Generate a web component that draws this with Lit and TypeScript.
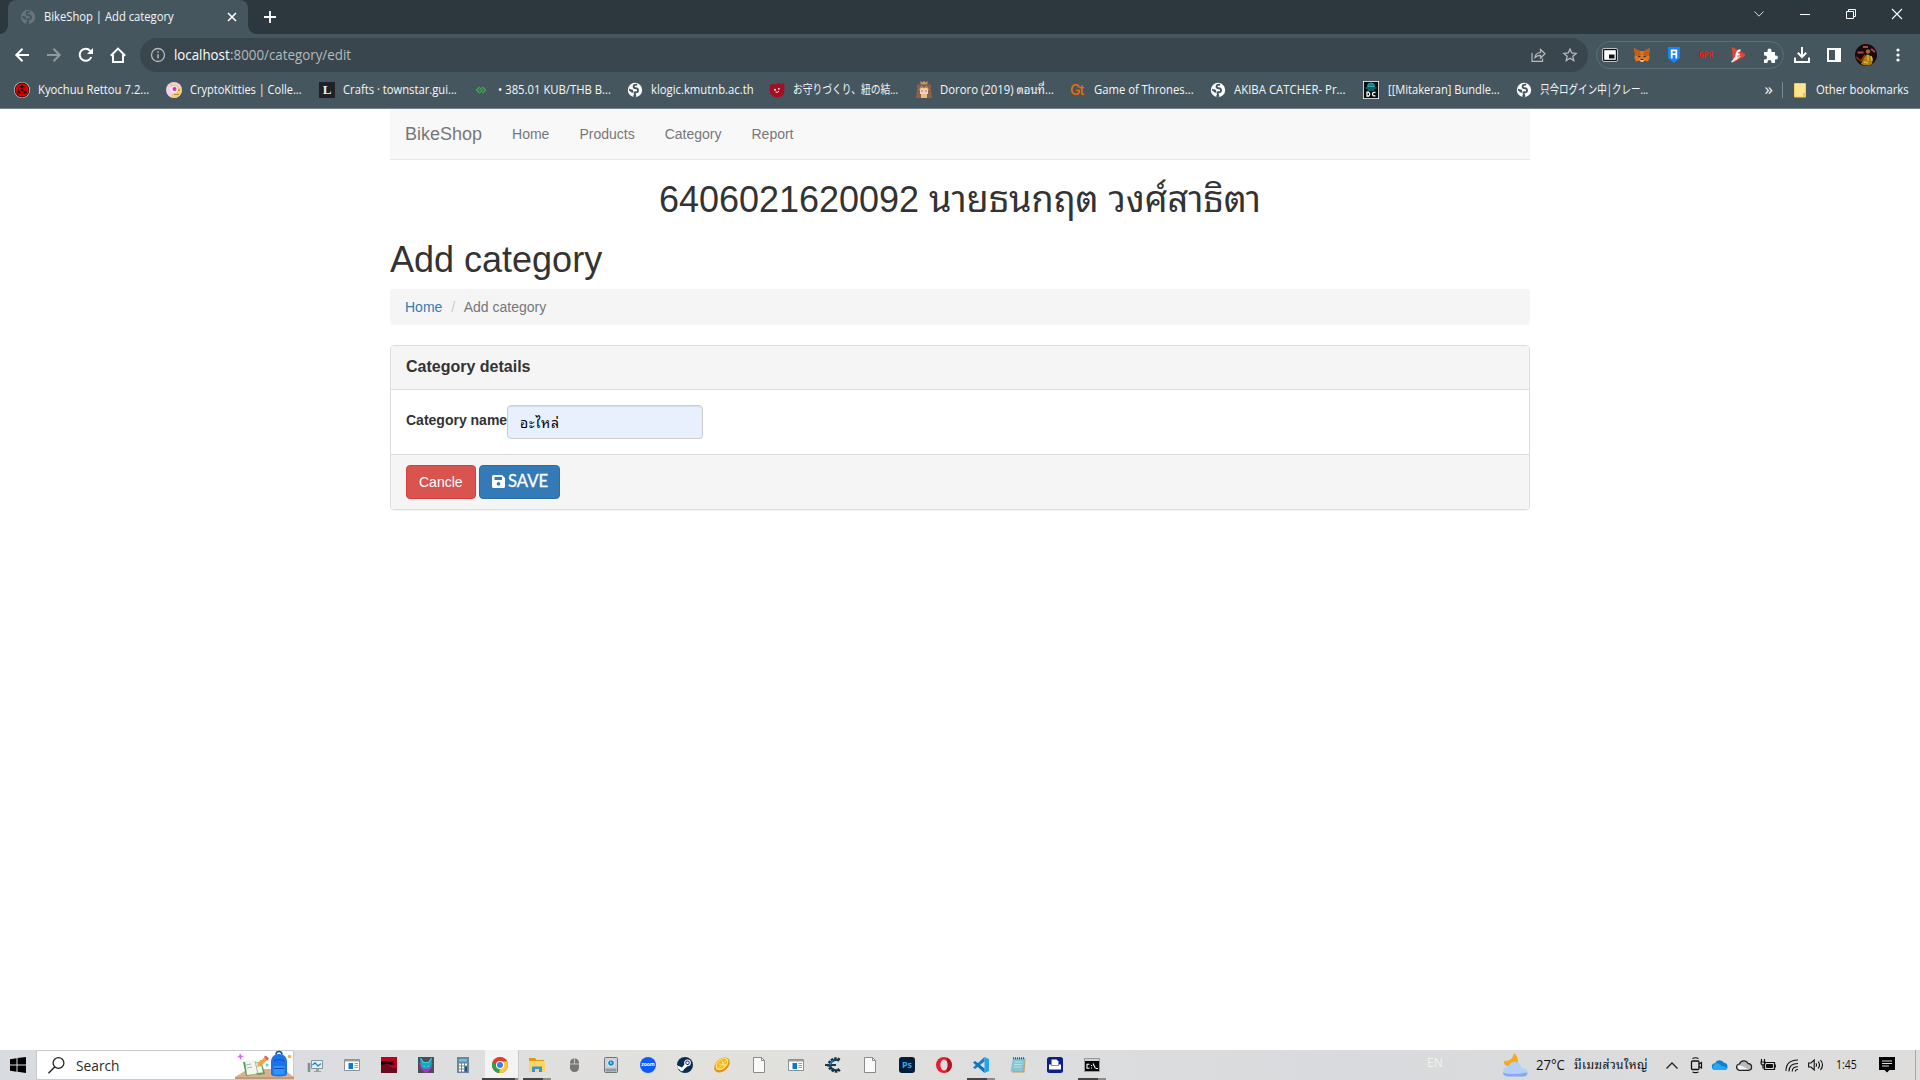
import { LitElement, html, svg, css, TemplateResult } from "lit";
import { customElement, property } from "lit/decorators.js";

/** One line of text that fills the given width: narrowed if too wide, tracked if too short. */
@customElement("fit-text")
class FitText extends LitElement {
  static styles = css`
    :host { display: inline-block; white-space: nowrap; flex: none; }
    span { display: inline-block; white-space: pre; transform-origin: 0 50%; }
  `;
  @property({ type: Number }) w = 0;
  @property() text = "";
  render() { return html`<span>${this.text}</span>`; }
  updated() {
    const s = this.renderRoot.querySelector("span") as HTMLElement;
    const natural = s.offsetWidth;
    if (natural > this.w + 1) {
      s.style.transform = `scaleX(${(this.w / natural).toFixed(4)})`;
    } else {
      const seg = new (Intl as any).Segmenter("en", { granularity: "grapheme" });
      const n = [...seg.segment(this.text)].length;
      s.style.letterSpacing = ((this.w - s.getBoundingClientRect().width) / n).toFixed(3) + "px";
    }
    this.style.width = this.w + "px";
  }
}

const ic = (w: number, h: number, body: TemplateResult | TemplateResult[], box = `0 0 ${w} ${h}`) =>
  html`<svg width=${w} height=${h} viewBox=${box} fill="none">${body}</svg>`;

const globe = (bg: string, fg: string) => ic(16, 16, svg`
  <circle cx="8" cy="8" r="7.200" fill=${bg}/>
  <path d="M10.200 2.700Q6.800 2.400 6.600 4.300T8.800 6.300 11 8.600 8.800 10.200 8 12.600 6.400 13.600" stroke=${fg} stroke-width="1.900"/>
  <path d="M2 6.800l3.800 1 .8 2.400-1.600.6L2 8.600z" fill=${fg}/>`);
const W = "#fff", BAR = "#46565f";

const marks: { ic: TemplateResult; t: string; w: number; gap: number; end: number }[] = [
  { t: "Kyochuu Rettou 7.2...", w: 111, gap: 8, end: 17, ic: ic(16, 16, svg`<circle cx="8" cy="8" r="8" fill="#ddd"/><circle cx="8" cy="8" r="7.4" fill="#111"/><circle cx="8" cy="8" r="6.6" fill="#e60000"/><circle cx="8" cy="8" r="3.8" stroke="#400" stroke-width=".8"/><circle cx="8" cy="8" r="1.4" fill="#100"/><circle cx="8" cy="4.3" r="1.6" fill="#100"/><circle cx="4.8" cy="10" r="1.6" fill="#100"/><circle cx="11.2" cy="10" r="1.6" fill="#100"/>`) },
  { t: "CryptoKitties | Colle...", w: 112, gap: 8, end: 17, ic: ic(16, 16, svg`<circle cx="8" cy="8" r="8" fill="#eecff0"/><path d="M4 2l2-1 1 2 3-.5 4 3 2 3-2 5-4 2.500-5-1 2-5z" fill="#f0cf6c"/><path d="M4 6l3-2 4 1 1 3-2 3-4 0z" fill="#fbe9f7"/><circle cx="8.5" cy="7" r="2" fill="#e02bc0"/><circle cx="13" cy="8" r=".8" fill="#c03aa0"/><path d="M8 12.500h5" stroke="#b78a2c"/>`) },
  { t: "Crafts · townstar.gui...", w: 114, gap: 8, end: 16, ic: html`<span class="lbox">L</span>` },
  { t: "• 385.01 KUB/THB B...", w: 113, gap: 8.5, end: 16, ic: ic(16, 16, svg`<path d="M6.500 5L3.500 8l3 3M6.300 8.300L9 5.500M9.500 5l3 3-3 3M9.700 7.700L7 10.500" stroke="#35b34f" stroke-width="1.1"/>`) },
  { t: "klogic.kmutnb.ac.th", w: 102.5, gap: 8, end: 16, ic: globe(W, BAR) },
  { t: "お守りづくり、紐の結...", w: 105, gap: 8, end: 18, ic: ic(16, 16, svg`<path d="M1 3l3-1 2 .5L9 1l3 1 3-1 .5 4-.5 7-3 2.500-3 1-4-.5L1.500 12 .5 7z" fill="#a50d22"/><circle cx="6" cy="7.800" r="1" fill="#fff"/><circle cx="9.800" cy="6.800" r=".9" fill="#fff"/><path d="M6.500 10q2.500 1 3.500-1" stroke="#fff"/>`) },
  { t: "Dororo (2019) ตอนที่...", w: 113.5, gap: 8, end: 16.5, ic: ic(16, 18, svg`<path d="M4.500 0l1.800 1.500L8 0l1.800 1.500L11.500 0v3.500h-7z" fill="#c99a4a"/><path d="M1 4l2-1 2 1h6l2-1 2 1v4l1 9H0l1-9z" fill="#8a6048"/><path d="M4 7h8v6H4z" fill="#f3d3b4"/><path d="M3.500 9l2-3.500L8 7.500l2.500-2 2 3.500" stroke="#d9a57a"/><path d="M5.500 10h1M9.500 10h1" stroke="#402818" stroke-width="1.200"/><path d="M5 13h6v4H5z" fill="#e7b98e"/>`) },
  { t: "Game of Thrones...", w: 99.5, gap: 8, end: 16, ic: html`<span class="gt">Gt</span>` },
  { t: "AKIBA CATCHER- Pr...", w: 112, gap: 8.5, end: 17, ic: globe(W, BAR) },
  { t: "[[Mitakeran] Bundle...", w: 112, gap: 8.5, end: 16, ic: ic(16, 18, svg`<path d="M0 0h16v18H0z" fill="#fff"/><path d="M.8.8h14.4v16.4H.8z" fill="#080d10"/><path d="M4.500 5.500q0-3.500 3.500-3.500t3.500 3.500zM2.500 7h11M4.500 9h7" stroke="#25a7b5" fill="#157c8a"/><path d="M4 11.200v4h1.600q2.200-2 0-4zM12.500 11.500q-3-.6-3 1.600t3 1.800" stroke="#fff" stroke-width="1.300"/>`) },
  { t: "只今ログイン中|クレー...", w: 108, gap: 8, end: 0, ic: globe(W, BAR) },
];

const doc = ic(16, 16, svg`<path d="M2.5.5h8l3 3v12h-11z" fill="#fafafa" stroke="#8b8b8b"/><path d="M10.5.5v3h3" stroke="#8b8b8b"/>`);
const win = ic(16, 16, svg`<path d="M.5 2.5h15v11H.5z" fill="#fff" stroke="#8d9194"/><path d="M1 3h14v1.5H1z" fill="#9aa0a4"/><path d="M4.5 6H9v6H4.5z" fill="#0d78d4"/><path d="M10.5 6.5h3.5M10.5 8.5h3.5M10.5 10.5h3.5" stroke="#999"/>`);

const apps: { i: TemplateResult; cls?: string }[] = [
  { i: ic(16, 16, svg`<path d="M4.5 3.5h11v8h-11z" fill="#d8f1fb" stroke="#8a9499"/><path d="M5.5 8L8 5.8l3 3.2 3-2.4" stroke="#1681b8" stroke-width="1.2"/><path d="M9 12h3v2H9zM7 14h7v1H7z" fill="#9ba2a6"/><path d="M.7 6h2.6v9H.7z" fill="#868b8e"/><path d="M1 12h1.6v2H1z" fill="#4bc04c"/>`) },
  { i: win },
  { i: ic(16, 16, svg`<path d="M0 0h16v16H0z" fill="#b9041c"/><path d="M0 8q6-2 9 1t7 2v5H0z" fill="#6e0a20"/><path d="M0 5q5-2 9 0l5-1-3 2 4 1-5 1-3-1-7 1z" fill="#14060a"/>`) },
  { i: ic(16, 16, svg`<path d="M0 0h16v16H0z" fill="#4d4e55"/><path d="M2.500 1l3 4.500h5l3-4.500.5 7-3 4H5L2 8z" fill="#22a3b8"/><path d="M2.500 1l3 4.500h5l3-4.500M5 9l2 .5M11 9l-2 .5" stroke="#22dde9" stroke-width="1.1"/><path d="M2 6l1 5 5 4.500L13 11l1-5M5.500 11.500L8 14l2.500-2.500" stroke="#bd2bd8" stroke-width="1.1"/>`) },
  { i: ic(16, 16, svg`<path d="M2 0h12v16H2z" fill="#6f8595"/><path d="M4 2h8v2.6H4z" fill="#57c9f1"/><path d="M4 6.5h2v2H4zM7 6.5h2v2H7zM10 6.5h2v2h-2zM4 9.5h2v2H4zM7 9.5h2v2H7zM4 12.5h2v2H4zM7 12.5h2v2H7z" fill="#fff"/><path d="M10 9.5h2v5h-2z" fill="#16528e"/>`) },
  { cls: "active", i: ic(16, 16, svg`<circle cx="8" cy="8" r="8" fill="#e33b2e"/><path d="M8 8L1.1 4A8 8 0 0 0 7.4 16l4.2-6z" fill="#2da14b"/><path d="M8 8l-.6 8A8 8 0 0 0 14.9 4.2H8z" fill="#fcc934"/><path d="M8 4.2h6.9A8 8 0 0 0 1.1 4l3.6 6z" fill="#e33b2e"/><circle cx="8" cy="8" r="4" fill="#fff"/><circle cx="8" cy="8" r="3" fill="#3b7de9"/>`) },
  { cls: "open near", i: ic(16, 16, svg`<path d="M0 1h6l1.5 2H15v4H0z" fill="#dc9a12"/><path d="M0 4h16v11H0z" fill="#fcd462"/><path d="M3 15V9.5h10V15h-3v-3H6v3z" fill="#3d92d4"/>`) },
  { i: ic(16, 16, svg`<rect x="4" y="1.5" width="9" height="13.5" rx="4.2" fill="#777"/><path d="M4 7h9M8.5 1.5V7" stroke="#d8d8d8" stroke-width=".8"/>`) },
  { i: ic(16, 16, svg`<rect x="1.5" y=".5" width="13" height="15" rx="1" fill="#ccd1d6" stroke="#71767a"/><path d="M2.5 11.5h11v3h-11z" fill="#92989d"/><circle cx="8" cy="6" r="3.6" fill="#e8f3fb"/><circle cx="8" cy="6" r="2.8" fill="#2183cf"/><path d="M7 5h1v2" stroke="#8ff"/>`) },
  { i: html`<span class="zoom">zoom</span>` },
  { i: ic(16, 16, svg`<circle cx="8" cy="8" r="8" fill="#0b2a55"/><path d="M0 9l7 3-2 3A8 8 0 0 1 0 9z" fill="#1b6ba3"/><circle cx="10.5" cy="5.8" r="2.8" stroke="#fff" stroke-width="1.2"/><circle cx="10.5" cy="5.8" r="1.3" fill="#fff"/><path d="M0 8.2l5 2.2 3-3.6 3 2-4 3.4a2.2 2.2 0 0 1-4.2.5L.5 11z" fill="#fff"/>`) },
  { i: ic(16, 16, svg`<ellipse cx="8" cy="8" rx="9" ry="6" transform="rotate(-42 8 8)" fill="#e98f12"/><ellipse cx="8.6" cy="7.2" rx="7.600" ry="4.800" transform="rotate(-42 8 8)" fill="#ffe98a"/><ellipse cx="8.8" cy="7" rx="6.300" ry="3.700" transform="rotate(-42 8 8)" fill="#ffb612"/><path d="M4.500 11L13 3M8 3.500l2 6M5 7l7 1" stroke="#fff3a0" stroke-width=".8"/>`) },
  { i: doc },
  { i: win },
  { i: ic(16, 16, svg`<path d="M14.5 3.2Q11 .8 7.6 3T4 8t3.8 5 6.7-.7" stroke="#142b38" stroke-width="3.4" stroke-dasharray="2.2 1"/><path d="M14 3.6Q11 1.8 8 3.6T5 8t3.2 4.6 6-.6M0 8h11" stroke="#163b52" stroke-width="2"/><path d="M5 8q0-3 3-4.4" stroke="#2d9fdc"/>`) },
  { i: doc },
  { i: html`<span class="ps">Ps</span>` },
  { i: ic(16, 16, svg`<circle cx="8" cy="8" r="8" fill="#e81c2e"/><path d="M11 .7a8 8 0 0 1 0 14.6z" fill="#b1121f"/><ellipse cx="8" cy="8" rx="3.6" ry="5.6" fill="#dcdddd"/>`) },
  { cls: "open", i: ic(16, 16, svg`<path d="M11.5 0L16 2v12l-4.500 2z" fill="#25a5f0"/><path d="M11.500 0v4.500L2.200 12 0 10.500z" fill="#1583cb"/><path d="M11.500 16v-4.500L2.200 4 0 5.500z" fill="#0e74b8"/>`) },
  { i: ic(16, 16, svg`<path d="M3.500 1.500H15.500L14.500 15.500H2z" fill="#c89c55"/><path d="M3 1h12L13 14.500H.5z" fill="#86c4d2"/><path d="M4.500 5h8M4 7.500h8M3.500 10h8" stroke="#b6e2ea"/><path d="M3 1.200h12" stroke="#41545c" stroke-width="2" stroke-dasharray="1 1"/>`) },
  { i: ic(16, 16, svg`<rect width="16" height="16" rx="2.500" fill="#0c1f8c"/><path d="M4.500 2.500h5l2 2V8h-7z" fill="#fff"/><path d="M2 7.500h2v1h8v-1h2V12.500H2z" fill="#fff"/>`) },
  { cls: "open", i: ic(16, 14, svg`<path d="M.5.5h15v13H.5z" fill="#050505" stroke="#9a9a9a"/><path d="M1 1h14v2H1z" fill="#ccd0d4"/><path d="M5.500 6.200H3v4h2.500M7.500 7v1M7.500 9.500v1M9 5.500l2.500 5M12 10.500h2" stroke="#fff" stroke-width="1.100"/>`) },
];

@customElement("app-root")
class AppRoot extends LitElement {
  static styles = css`
    * { box-sizing: border-box; }
    :host { display: flex; flex-direction: column; width: 1920px; height: 1080px; overflow: hidden; background: #fff;
      font-family: "Liberation Sans", "Noto Sans Thai Looped", "Loma", "Waree", "Garuda", "Noto Sans Thai", sans-serif; font-size: 14px; line-height: 20px; color: #333; }
    svg { display: block; flex: none; overflow: visible; }
    .ui { font-family: "Open Sans", "Noto Sans", "Noto Sans Thai Looped", "Loma", "Waree", "Noto Sans Thai", "Noto Sans CJK JP", sans-serif; font-size: 12px; line-height: 18px; }
    .strip { height: 34px; background: #2d383e; display: flex; padding-left: 8px; flex: none; }
    .tab { position: relative; width: 240px; height: 34px; background: #46565f; border-radius: 8px 8px 0 0; display: flex; align-items: center; padding: 0 10px 0 12px; color: #f5f7f8; }
    .tab::before, .tab::after { content: ""; position: absolute; bottom: 0; width: 8px; height: 8px; }
    .tab::before { left: -8px; background: radial-gradient(circle at 0 0, transparent 7.5px, #46565f 8px); }
    .tab::after { right: -8px; background: radial-gradient(circle at 100% 0, transparent 7.5px, #46565f 8px); }
    .tab fit-text { margin-left: 8px; }
    .tab .x { margin-left: auto; margin-right: 1px; }
    .plus { margin: 11px 0 0 16px; }
    .wins { margin-left: auto; display: flex; height: 28px; align-items: center; }
    .wins > span, .cell { width: 46px; display: flex; justify-content: center; align-items: center; }
    .toolbar { height: 42px; background: #46565f; display: flex; align-items: center; padding: 0 6px; flex: none; }
    .cell { width: 32px; flex: none; }
    .omni { margin-left: 6px; width: 1448px; height: 34px; border-radius: 17px; background: #39464d; display: flex; align-items: center; padding: 0 2px 0 10px; color: #b4babd; font-size: 14px; }
    .omni fit-text:first-of-type { margin-left: 8px; color: #fff; }
    .omni .share { margin-left: auto; }
    .pill { margin-left: 8px; width: 188px; height: 28px; border: 1px solid #5d6d76; border-radius: 14px; display: flex; align-items: center; justify-content: center; flex: none; }
    .pill .cell { flex: 0 0 32px; }
    .gpr { font: bold 8px "DejaVu Sans Mono", monospace; color: #e0200f; }
    .toolbar > .cell.dl { margin-left: 2px; }
    .marks { height: 33px; background: #46565f; border-bottom: 1px solid #75838b; display: flex; align-items: center; padding: 0 11px 4px 14px; color: #f5f7f8; flex: none; }
    .mark { display: flex; align-items: center; flex: none; height: 18px; }
    .lbox { width: 16px; height: 16px; background: #1f2127; color: #eee; font: bold 13px/16px "Liberation Serif", serif; text-align: center; }
    .gt { width: 16px; color: #ef6c00; font: 500 14px/16px "Inter", sans-serif; letter-spacing: -1px; }
    .more { margin-left: auto; font: 17px/16px "Open Sans", sans-serif; margin: -3px 9px 0 auto; }
    .sep { width: 1px; height: 16px; background: #7d8a92; margin-right: 11px; }

    .page { flex: 1; width: 1140px; margin: 0 auto; }
    .nav { height: 51px; background: #f8f8f8; border-bottom: 1px solid #e7e7e7; display: flex; color: #777; padding: 15px 0; }
    .nav span { padding: 0 15px; }
    .nav .brand { font-size: 18px; }
    h1 { font-weight: 400; font-size: 36px; line-height: 39.6px; height: 39.6px; margin: 20px 0 0; white-space: nowrap; }
    .who { display: flex; justify-content: center; }
    .crumb { margin-top: 10px; margin-bottom: 20px; height: 36px; padding: 8px 15px; background: #f5f5f5; border-radius: 4px; color: #777; display: flex; }
    .crumb a { color: #337ab7; }
    .crumb i { font-style: normal; color: #ccc; padding: 0 8.500px 0 9px; }
    .panel { border: 1px solid #ddd; border-radius: 4px; box-shadow: 0 1px 1px rgba(0,0,0,.05); overflow: hidden; }
    .head { background: #f5f5f5; border-bottom: 1px solid #ddd; padding: 10px 15px; height: 44px; line-height: 22px; font-size: 16px; font-weight: 700; }
    .body { padding: 15px; height: 64px; display: flex; font-weight: 700; }
    .body label { padding-top: 5px; width: 101px; white-space: nowrap; }
    .input { width: 196px; height: 34px; border: 1px solid #ccc; border-radius: 4px; background: #e8f0fe; padding: 7px 12px; font-weight: 400; color: #000; box-shadow: inset 0 1px 1px rgba(0,0,0,.075); }
    .foot { background: #f5f5f5; border-top: 1px solid #ddd; padding: 10px 15px; display: flex; gap: 3px; height: 55px; }
    .btn { height: 34px; border-radius: 4px; border: 1px solid #d43f3a; background: #d9534f; color: #fff; padding: 6px 12px; width: 70px; white-space: nowrap; }
    .btn.save { width: 81px; background: #337ab7; border-color: #2e6da4; display: flex; align-items: center; font-family: Lato, sans-serif; font-size: 17.5px; padding: 5px 0 7px 12px; gap: 3px; -webkit-text-stroke: .3px #fff; }

    .task { height: 30px; flex: none; display: flex; color: #111; background: linear-gradient(90deg, #d8dbe0 0, #dcdddf 20%, #e2e1dd 36%, #dcddde 56%, #d8dadd 70%, #dedddc 100%); }
    .start { width: 36px; display: flex; align-items: center; justify-content: center; }
    .search { width: 258px; background: #fff; border: 1px solid #c9cacb; display: flex; align-items: center; padding-left: 11px; margin-right: 2.5px; font-size: 15px; color: #2b2b2b; }
    .search fit-text { margin-left: 11px; }
    .search .art { margin: 0 -1px 0 auto; }
    .app { width: 37px; display: flex; align-items: center; justify-content: center; position: relative; flex: none; }
    .app.active { background: linear-gradient(90deg, transparent 3.5px, #f3f3f3 3.5px 36px, #c9c9c9 36px); }
    .app.active::after, .app.open::after { content: ""; position: absolute; left: 4px; bottom: 0; width: 28px; height: 2px; background: linear-gradient(90deg, #444 20px, #8b8b8b 20px); }
    .app.active::after { left: 0.5px; width: 36px; background: linear-gradient(90deg, #444 33px, #8b8b8b 33px); }
    .app.active::after { left: .5px; }
    .zoom { width: 16px; height: 16px; border-radius: 8px; background: #0b5cff; color: #fff; font: bold 5px/15px "Open Sans", sans-serif; text-align: center; }
    .ps { width: 16px; height: 16px; border-radius: 3px; background: #001e36; color: #31a8ff; font: bold 9px/15px "Open Sans", sans-serif; text-align: center; }
    .tray { margin-left: auto; display: flex; align-items: center; }
    .en { color: #f3f2ea; margin: -5px 60px 0 0; }
    .tray .temp { margin-left: 8px; font-size: 14px; }
    .tray .wx { margin-left: 9px; margin-right: 12px; }
    .t { width: 24px; display: flex; justify-content: center; }
    .clock { margin-left: 8px; margin-right: 1px; }
    .note { margin: 0 20px 0 21px; }
    .edge { width: 5px; height: 30px; border-left: 1px solid #a8a8a8; }
  `;

  chrome() {
    return html`
    <div class="strip ui">
      <div class="tab">${globe("#69757b", BAR)}<fit-text w="130" text="BikeShop | Add category"></fit-text>
        <span class="x">${ic(10, 10, svg`<path d="M1 1l8 8M9 1L1 9" stroke="#fff" stroke-width="1.6"/>`)}</span></div>
      <span class="plus">${ic(12, 12, svg`<path d="M6 0v12M0 6h12" stroke="#fff" stroke-width="1.8"/>`)}</span>
      <div class="wins">
        <span>${ic(10, 6, svg`<path d="M.5.500L5 5.200 9.500.500" stroke="#ddd"/>`)}</span>
        <span>${ic(10, 2, svg`<path d="M0 1.500h10" stroke="#fff"/>`)}</span>
        <span>${ic(10, 10, svg`<path d="M.5 2.500h7v7h-7zM2.500 2.500v-2h7v7h-2" stroke="#fff"/>`)}</span>
        <span>${ic(10, 10, svg`<path d="M0 0l10 10M10 0L0 10" stroke="#fff" stroke-width="1.100"/>`)}</span>
      </div>
    </div>
    <div class="toolbar ui">
      <span class="cell">${ic(14, 14, svg`<path d="M14 7H1.500M7.500.700L1.300 7l6.200 6.300" stroke="#fff" stroke-width="2"/>`)}</span>
      <span class="cell">${ic(14, 14, svg`<path d="M0 7h12.500M6.500.700L12.700 7l-6.200 6.300" stroke="#8f9a9f" stroke-width="2"/>`)}</span>
      <span class="cell">${ic(14, 14, svg`<path d="M12.300 9A6 6 0 1 1 11.200 2.800L12.500 4.200" stroke="#fff" stroke-width="2"/><path d="M14 0v6H8z" fill="#fff"/>`)}</span>
      <span class="cell">${ic(16, 16, svg`<path d="M3 7.500V15h10V7.500M.8 8.800L8 1.600l7.200 7.200" stroke="#fff" stroke-width="2"/>`)}</span>
      <div class="omni">
        ${ic(16, 16, svg`<circle cx="8" cy="8" r="6.500" stroke="#b4babd" stroke-width="1.300"/><path d="M8 7.200v4M8 4.300v1.500" stroke="#b4babd" stroke-width="1.500"/>`)}
        <fit-text w="56" text="localhost"></fit-text><fit-text w="121" text=":8000/category/edit"></fit-text>
        <span class="cell share">${ic(15, 14, svg`<path d="M1 5v8.300h10.500V10.500M4 9.500Q4.500 5 9.500 4.500V1.500L14 5.800 9.500 10V7.300Q6 7.300 4 9.500z" stroke="#b4babd" stroke-width="1.200"/>`)}</span>
        <span class="cell">${ic(14, 14, svg`<path d="M7 1l1.800 4 4.300.4-3.300 2.900 1 4.300L7 10.300l-3.800 2.300 1-4.300L.9 5.400 5.200 5z" stroke="#b4babd" stroke-width="1.300"/>`)}</span>
      </div>
      <div class="pill">
        <span class="cell">${ic(16, 14, svg`<rect x=".5" y=".5" width="15" height="13" rx="1.500" fill="#101418" stroke="#b9bfc3"/><path d="M2.200 2.200h11.600v9.600H2.200z" fill="#fff"/><path d="M7 6.500h5.500v4H7z" fill="#101418"/>`)}</span>
        <span class="cell">${ic(16, 16, svg`<path d="M0 1l6 3h4l6-3-1 7 .6 3-1.600 3.500-4-1L9 15H7l-1-1.500-4 1L.4 11 1 8z" fill="#e2761b"/><path d="M0 1l6 3 1 4-5.500 1M16 1l-6 3-1 4 5.500 1" fill="#ad4f15" opacity=".6"/><path d="M4 9l2.500 1M12 9L9.500 10" stroke="#233447" stroke-width="1.300"/><path d="M5 12h6l-2 3H7z" fill="#d7c1b3"/><path d="M6.500 12h3v1h-3z" fill="#222"/>`)}</span>
        <span class="cell">${ic(12, 16, svg`<path d="M0 0h12v11l-6 5-6-5z" fill="#1585ff"/><path d="M3.700 11.500V3.300h4.600v8.200M3.700 7.200h4.600" stroke="#fff" stroke-width="1.800"/>`)}</span>
        <span class="cell gpr">GPR</span>
        <span class="cell">${ic(16, 16, svg`<path d="M2 0l13 7v2L3 16z" fill="#ef4036"/><path d="M1 15l4-5 6-1-4 3.500-5 3z" fill="#e9e4e4"/><path d="M10.500 3.500Q7.500 3 6.800 6.500L5.500 12M5.500 7.500h4.200" stroke="#fff" stroke-width="1.900"/>`)}</span>
        <span class="cell">${ic(15, 15, svg`<path d="M1 4h3.500V2.500a2 2 0 0 1 4 0V4H12v3.500h1a2 2 0 0 1 0 4h-1V15H8.500v-1a2 2 0 0 0-4 0v1H1v-3.500h1a2 2 0 0 0 0-4H1z" fill="#fff"/>`)}</span>
      </div>
      <span class="cell dl">${ic(16, 16, svg`<path d="M8 0v9.500M3.800 5.800L8 10l4.200-4.200M1 10.500V15h14v-4.500" stroke="#fff" stroke-width="2"/>`)}</span>
      <span class="cell">${ic(14, 14, svg`<path d="M1 1h12v12H1z" stroke="#fff" stroke-width="2"/><path d="M8 0h6v14H8z" fill="#fff"/>`)}</span>
      <span class="cell">${ic(22, 22, svg`<circle cx="11" cy="11" r="11" fill="#1b0b08"/><path d="M2.500 8.500h6M8 3h5M16 5l4 3" stroke="#b8404e" stroke-width="1.800"/><circle cx="13" cy="7.500" r="2.200" fill="#a8642f"/><path d="M6 20q3-7 5-9t7 3l-1 6q-5 3-11 0z" fill="#a87b16"/><path d="M13 11v6M9 18l4 1M16 12l1 5" stroke="#e0b92b" stroke-width="1.300"/><path d="M1 13l5 4 4-6" stroke="#8c3413" stroke-width="1.500"/>`)}</span>
      <span class="cell">${ic(4, 14, svg`<circle cx="2" cy="2" r="1.600" fill="#fff"/><circle cx="2" cy="7" r="1.600" fill="#fff"/><circle cx="2" cy="12" r="1.600" fill="#fff"/>`)}</span>
    </div>
    <div class="marks ui">
      ${marks.map(m => html`<span class="mark">${m.ic}<fit-text w=${m.w} text=${m.t} style="margin-left:${m.gap}px;margin-right:${m.end}px"></fit-text></span>`)}
      <span class="more">»</span><span class="sep"></span>
      ${ic(13, 15, svg`<path d="M.5.500h11v13.500H.5z" fill="#fee391" stroke="#f6cd57"/><path d="M9 14v-4h2.500v4z" fill="#f2c23e"/>`)}
      <fit-text w="93" text="Other bookmarks" style="margin-left:9px"></fit-text>
    </div>`;
  }

  taskbar() {
    return html`<div class="task ui">
      <span class="start">${ic(16, 16, svg`<path d="M0 2.200L6.500 1.300V7.500H0zM7.500 1.100L16 0V7.500H7.500zM0 8.500h6.500v6.200L0 13.800zM7.500 8.500H16V16l-8.500-1.200z" fill="#000"/>`)}</span>
      <div class="search">
        ${ic(17, 17, svg`<circle cx="10.500" cy="6" r="5.400" stroke="#222" stroke-width="1.300"/><path d="M6.700 10L.5 16.300" stroke="#222" stroke-width="1.400"/>`)}
        <fit-text w="44" text="Search"></fit-text>
        <span class="art">${ic(59, 28, svg`
          <path d="M0 28V26L13 18H48L59 26V28z" fill="#d9b28b"/><path d="M0 26h59v2H0z" fill="#c59a72"/>
          <path d="M8 11l9-1 3 1 6-2 4 14-7 1-2-1-10 2z" fill="#56a061"/><path d="M10 10l7-1 3 1 5-1.500 3 13-6 .5-2 1-8 1z" fill="#f3f6ec"/><path d="M20 10l3 13M11 14l5-1M12 17l5-1M21 12l4-1" stroke="#a8b8aa"/>
          <path d="M31 5l-8 7-1 4 4-1 7-7z" fill="#f5a33a"/><path d="M29 6l1.500-1.500 3.500 3L32.500 9.500z" fill="#eb5a50"/>
          <path d="M36 23V10Q37 3 44 3T52 10V23Q52 25.500 44 25.500T36 23z" fill="#1c72e8"/><path d="M41 3.500q0-3 3-3t3 3" stroke="#1a4aa4" stroke-width="1.600"/><path d="M38.500 15h11v8.500h-11z" fill="#2e94ff"/><path d="M39 10q5-3 10 0M39 17.500h10" stroke="#164bb4" stroke-width="1.100"/>
          <path d="M5 2l1.200 2.500L9 5 6.500 6.500 6 9 4.500 6.500 2 6l2.400-1.500z" fill="#d66be8"/><circle cx="54.500" cy="5.500" r="1.700" fill="#f7b02c"/><circle cx="32" cy="14" r="1.500" fill="#54d2e6"/>`)}</span>
      </div>
      ${apps.map(a => html`<span class="app ${a.cls ?? ""}">${a.i}</span>`)}
      <div class="tray">
        <fit-text class="en" w="16" text="EN"></fit-text>
        ${ic(25, 24, svg`<path d="M11 0q6 5 3 13H4Q0 11 1 8q8 1 10-8z" fill="#f8a91c"/><path d="M6 23.500q-6 0-6-5t5.500-5Q8 8 13 9t5 6q6.500 0 6.500 4.500t-5 4z" fill="#b4cff8"/><path d="M6 23.500q-6 0-6-4 8 3 24.500 0 0 4-5 4z" fill="#86aaee"/>`)}
        <fit-text class="temp" w="29" text="27°C"></fit-text><fit-text class="wx" w="74" text="มีเมฆส่วนใหญ่"></fit-text>
        <span class="t">${ic(12, 7, svg`<path d="M.5 6.500L6 1l5.500 5.500" stroke="#222" stroke-width="1.300"/>`)}</span>
        <span class="t">${ic(13, 16, svg`<rect x="1.500" y="4" width="7.500" height="8.500" rx="1" stroke="#111" stroke-width="1.300"/><path d="M9 7l2.500-1.500v5.500L9 9.500M2.500 1.500q3-1.500 6 0M2.500 15q3 1.200 6 0" stroke="#111" stroke-width="1.200"/>`)}</span>
        <span class="t">${ic(16, 10, svg`<path d="M3.500 10A3.400 3.400 0 0 1 3 3.200 5 5 0 0 1 12 2.800 3.700 3.700 0 0 1 13 10z" fill="#0f7fd5"/><path d="M3 3.200q3-1 6 2.300L15.500 8q-.6 2-2.500 2H3.500Q1 9.800.3 7.800z" fill="#28a8ea"/>`)}</span>
        <span class="t">${ic(16, 11, svg`<path d="M4 10.300A3 3 0 0 1 3.500 4 4.600 4.600 0 0 1 12 3.600a3.300 3.300 0 0 1 .5 6.700z" fill="#b9b9b9" stroke="#222" stroke-width="1.200"/><path d="M4 9.500Q1.500 9 2 6.500q1.500-2 5 0l5.500 2.700z" fill="#f4f4f4"/>`)}</span>
        <span class="t">${ic(16, 12, svg`<path d="M4.500 3.500h10v7h-10z" stroke="#111" stroke-width="1.200"/><path d="M6.500 5.500h6v3h-6z" fill="#111" stroke="#111"/><path d="M15.300 5.500v3M1.500 0v3M4.500 0v3M.5 3h5M1 3.500q0 2.500 2 2.500t2-2.500M3 6v3h1.500" stroke="#111" stroke-width="1.200"/>`)}</span>
        <span class="t">${ic(14, 13, svg`<path d="M1 12Q1 1 13 1M4 12.500Q4 4.500 13 4.500M7.200 12.500Q7.200 7.800 13 7.800M10.300 12.500Q10.300 10.500 13 10.500" stroke="#111" stroke-width="1.100"/>`)}</span>
        <span class="t">${ic(16, 12, svg`<path d="M.6 4h2.400l3.200-3v10L3 8H.6z" stroke="#111" stroke-width="1.100"/><path d="M8 4.300q1.200 1.700 0 3.400M10.200 2.500q2.600 3.500 0 7M12.500 1q4 5 0 10" stroke="#111" stroke-width="1.100"/>`)}</span>
        <fit-text class="clock" w="21" text="1:45"></fit-text>
        <span class="note">${ic(16, 16, svg`<path d="M0 0h16v13h-5.500L8 15.500 5.500 13H0z" fill="#000"/><path d="M3 4h10M3 6.500h10M3 9h7" stroke="#ddd"/>`)}</span>
        <span class="edge"></span>
      </div>
    </div>`;
  }

  render() {
    return html`${this.chrome()}
    <main class="page">
      <div class="nav"><span class="brand">BikeShop</span><span>Home</span><span>Products</span><span>Category</span><span>Report</span></div>
      <h1 class="who"><fit-text w="270" text="6406021620092 "></fit-text><fit-text w="332" text="นายธนกฤต วงศ์สาธิตา"></fit-text></h1>
      <h1>Add category</h1>
      <div class="crumb"><a>Home</a><i>/</i><span>Add category</span></div>
      <section class="panel">
        <div class="head">Category details</div>
        <div class="body"><label>Category name</label><div class="input"><fit-text w="40" text="อะไหล่"></fit-text></div></div>
        <div class="foot"><div class="btn">Cancle</div>
          <div class="btn save">${ic(13, 13, svg`<path fill-rule="evenodd" d="M1.500 0H10l3 3v8.500a1.500 1.500 0 0 1-1.500 1.500h-10A1.500 1.500 0 0 1 0 11.500v-10A1.500 1.500 0 0 1 1.500 0zM2.500 2v3h7.500V2zM6.500 7a1.800 1.800 0 1 0 .01 0z" fill="#fff"/>`)}<fit-text w="40" text="SAVE"></fit-text></div></div>
      </section>
    </main>
    ${this.taskbar()}`;
  }
}
